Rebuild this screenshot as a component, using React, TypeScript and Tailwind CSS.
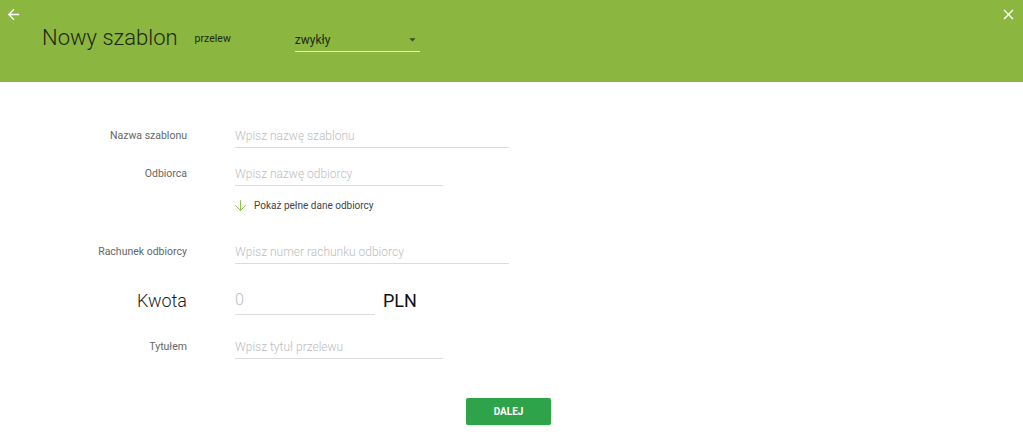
import { ArrowDown } from 'lucide-react';

const font = { fontFamily: 'Roboto, "Liberation Sans", sans-serif' };

function Field({ label, placeholder, width, big }: { label: string; placeholder: string; width: string; big?: boolean }) {
    return (
        <div className="flex items-center">
            <div className={`w-[187px] shrink-0 text-right ${big ? 'text-[18px] font-light text-[#222]' : 'text-[10.5px] text-[#666]'}`}>{label}</div>
            <input
                placeholder={placeholder}
                className={`ml-[48px] ${width} ${big ? 'h-[30px] text-[16px] font-light' : 'h-6 text-[12px] font-light'} border-b border-[#dcdcdc] bg-transparent outline-none placeholder:text-[#bdbdbd]`}
            />
            {big && <span className="ml-[8px] text-[18px] text-[#111]">PLN</span>}
        </div>
    );
}

export default function App() {
    return (
        <div className="h-[436px] w-[1023px] overflow-hidden bg-white" style={font}>
            {/* Nagłówek */}
            <div className="relative h-[82px] bg-[#8bb640]">
                <svg className="absolute left-[5px] top-[6px] h-[17px] w-[17px]" viewBox="0 0 24 24" fill="white">
                    <path d="M20 11H7.83l5.59-5.59L12 4l-8 8 8 8 1.41-1.41L7.83 13H20v-2z" />
                </svg>
                <svg className="absolute right-[6px] top-[6px] h-[17px] w-[17px]" viewBox="0 0 24 24" fill="white">
                    <path d="M19 6.41L17.59 5 12 10.59 6.41 5 5 6.41 10.59 12 5 17.59 6.41 19 12 13.41 17.59 19 19 17.59 13.41 12z" />
                </svg>
                <div className="flex items-center pl-[42px] pt-[21px]">
                    <span className="text-[22px] font-light text-[#1c2810]">Nowy szablon</span>
                    <span className="ml-[17px] mt-[3px] text-[10.5px] text-[#1c2810]">przelew</span>
                    <div className="ml-[64px] mt-[5px] flex h-[24px] w-[125px] items-center justify-between border-b border-[#e6efd6]">
                        <span className="text-[12px] text-[#1c2810]">zwykły</span>
                        <svg className="h-[15px] w-[15px]" viewBox="0 0 24 24" fill="#3a4a2a">
                            <path d="M7 10l5 5 5-5z" />
                        </svg>
                    </div>
                </div>
            </div>

            {/* Formularz */}
            <div className="flex flex-col pt-[42px]">
                <Field label="Nazwa szablonu" placeholder="Wpisz nazwę szablonu" width="w-[274px]" />
                <div className="mt-[14px]">
                    <Field label="Odbiorca" placeholder="Wpisz nazwę odbiorcy" width="w-[208px]" />
                </div>
                <div className="ml-[232px] mt-[11px] flex h-4 items-center gap-[5px]">
                    <ArrowDown className="h-[17px] w-[17px] text-[#8bc34a]" strokeWidth={1.4} />
                    <span className="text-[10px] text-[#444]">Pokaż pełne dane odbiorcy</span>
                </div>
                <div className="mt-[27px]">
                    <Field label="Rachunek odbiorcy" placeholder="Wpisz numer rachunku odbiorcy" width="w-[274px]" />
                </div>
                <div className="mt-[21px]">
                    <Field label="Kwota" placeholder="0" width="w-[140px]" big />
                </div>
                <div className="mt-[20px]">
                    <Field label="Tytułem" placeholder="Wpisz tytuł przelewu" width="w-[208px]" />
                </div>
                <div className="mt-[39px] pl-[466px]">
                    <button className="h-[27px] w-[85px] rounded-[2px] bg-[#2fa34a] text-[10px] font-bold text-white shadow-sm">DALEJ</button>
                </div>
            </div>
        </div>
    );
}
